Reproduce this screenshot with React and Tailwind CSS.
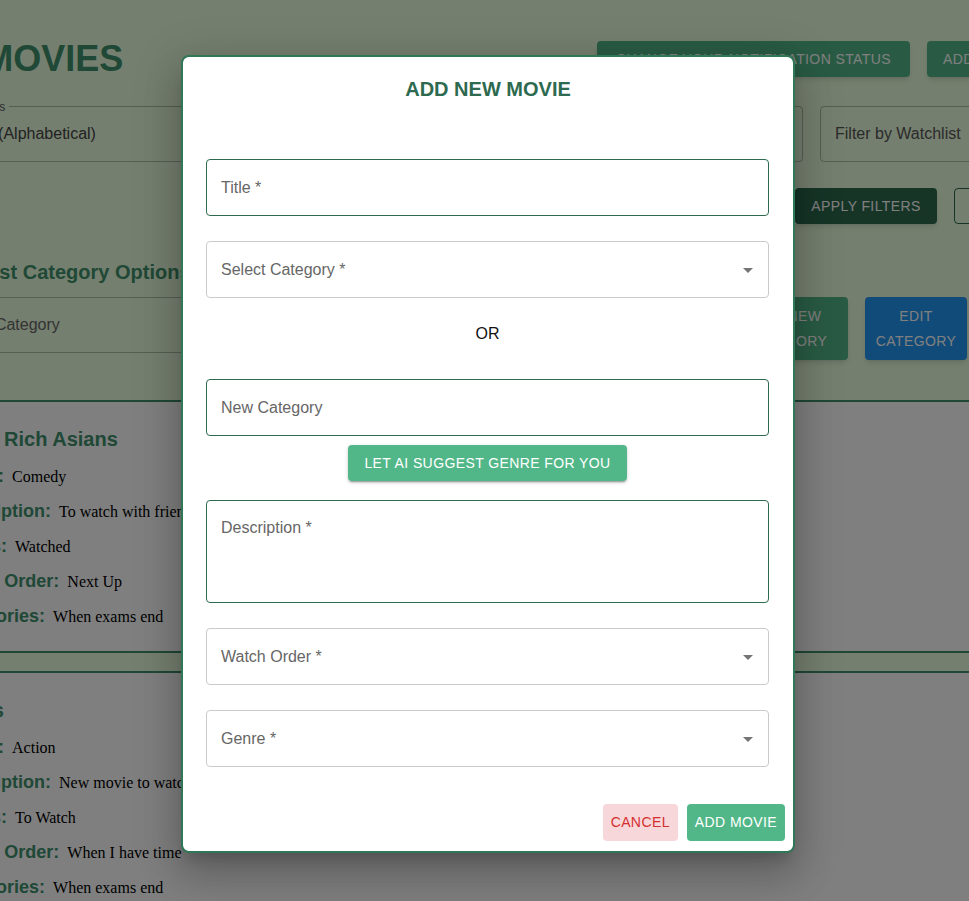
import React from 'react';

const MOVIES = [
  {
    title: 'Crazy Rich Asians',
    genre: 'Comedy',
    description: 'To watch with friends',
    status: 'Watched',
    order: 'Next Up',
    categories: 'When exams end',
  },
  {
    title: 'Wings',
    genre: 'Action',
    description: 'New movie to watch',
    status: 'To Watch',
    order: 'When I have time',
    categories: 'When exams end',
  },
];

function DropArrow() {
  return (
    <svg viewBox="0 0 24 24" className="w-6 h-6 shrink-0 fill-[#757575]">
      <path d="M7 10l5 5 5-5z" />
    </svg>
  );
}

// outlined text field / select, label sitting inside (not shrunk)
function Field({ label, green, select, tall, className = '' }) {
  return (
    <div
      className={`flex ${tall ? 'h-[103px] items-start pt-[15px]' : 'h-[57px] items-center'} rounded border ${
        green ? 'border-[#2d6a4f]' : 'border-[#cacaca]'
      } pl-[14px] pr-[8px] text-[16px] leading-[23px] text-[#666] ${className}`}
    >
      <span className="flex-1">{label}</span>
      {select && <DropArrow />}
    </div>
  );
}

function MovieRow({ label, value }) {
  return (
    <div className="h-[35px] leading-[35px] whitespace-nowrap">
      <span className="text-[18px] font-bold text-[#40916c]">{label}:</span>
      <span className="ml-[8px] font-['Liberation_Serif',serif] text-[16px] text-black">{value}</span>
    </div>
  );
}

function MovieCard({ movie }) {
  return (
    <div className="bg-white border-y-2 border-[#40916c] pt-[23px] pb-[17px]">
      <div className="-ml-[54px]">
        <h2 className="-ml-[2px] mb-[6px] text-[20px] leading-[28px] font-bold text-[#40916c] whitespace-nowrap">
          {movie.title}
        </h2>
        <MovieRow label="Genre" value={movie.genre} />
        <MovieRow label="Description" value={movie.description} />
        <MovieRow label="Status" value={movie.status} />
        <MovieRow label="Watch Order" value={movie.order} />
        <MovieRow label="Categories" value={movie.categories} />
      </div>
    </div>
  );
}

const btn = 'shrink-0 rounded text-[14px] font-medium uppercase tracking-[0.4px] whitespace-nowrap';

export default function App() {
  return (
    <div className="relative h-[901px] w-full overflow-hidden bg-[#eaffde] font-['Liberation_Sans',Arial,sans-serif]">
      {/* page behind the dialog */}
      <section className="pt-[40px] pb-[40px]">
        <div className="flex items-center h-[38px]">
          <h1 className="-ml-[80px] w-[677px] shrink-0 text-[36px] leading-[40px] font-bold text-[#40916c] whitespace-nowrap">
            MY MOVIES
          </h1>
          <div className="flex gap-[17px]">
            <button className={`${btn} w-[313px] h-9 bg-[#52b788] text-white shadow-md`}>
              Change your notification status
            </button>
            <button className={`${btn} h-9 px-4 bg-[#52b788] text-white shadow-md`}>Add new movie</button>
          </div>
        </div>

        <div className="flex gap-[17px] mt-[28px]">
          <div className="relative -ml-[51px] w-[854px] shrink-0 h-[56px] flex items-center pl-[14px] rounded border border-black/25 text-[16px] text-[#444]">
            <span className="absolute -top-[9px] left-[-12px] px-1 bg-[#eaffde] text-[12px] text-[#555]">Sort Movies</span>
            Title (Alphabetical)
          </div>
          <div className="w-[240px] shrink-0 h-[56px] flex items-center pl-[14px] rounded border border-black/25 text-[16px] text-[#555]">
            Filter by Watchlist
          </div>
        </div>

        <div className="flex gap-[17px] mt-[26px] ml-[795px]">
          <button className={`${btn} w-[142px] h-[36px] bg-[#2d6a4f] text-white shadow-md`}>Apply filters</button>
          <button className={`${btn} h-[36px] px-4 border border-[#2d6a4f] text-[#2d6a4f]`}>Clear filters</button>
        </div>

        <h2 className="-ml-[71px] mt-[34px] text-[20px] leading-[28px] font-bold text-[#40916c] whitespace-nowrap">
          Watchlist Category Options
        </h2>

        <div className="flex gap-[17px] mt-[11px]">
          <div className="-ml-[69px] w-[778px] shrink-0 h-[56px] flex items-center pl-[14px] rounded border border-black/25 text-[16px] text-[#666]">
            Select Category
          </div>
          <button className={`${btn} w-[122px] h-[63px] leading-[25px] bg-[#52b788] text-white shadow-md`}>
            Add new
            <br />
            category
          </button>
          <button className={`${btn} w-[102px] h-[63px] leading-[25px] bg-[#2196f3] text-white shadow-md`}>
            Edit
            <br />
            category
          </button>
        </div>
      </section>

      <section className="flex flex-col gap-[18px]">
        {MOVIES.map((m) => (
          <MovieCard key={m.title} movie={m} />
        ))}
      </section>

      {/* dialog */}
      <div className="absolute inset-0 bg-black/50">
        <div className="ml-[181px] mt-[55px] w-[614px] bg-white border-2 border-[#2f7756] rounded-lg shadow-[0_11px_15px_-7px_rgba(0,0,0,0.2),0_24px_38px_3px_rgba(0,0,0,0.14),0_9px_46px_8px_rgba(0,0,0,0.12)]">
          <h2 className="pt-[18px] text-center text-[20px] leading-[28px] font-bold text-[#2d6a4f]">ADD NEW MOVIE</h2>

          <div className="pl-[23px] pr-[24px]">
            <Field label="Title *" green className="mt-[56px]" />
            <Field label="Select Category *" select className="mt-[25px]" />
            <div className="mt-[24px] text-center text-[16px] leading-6 text-[#111]">OR</div>
            <Field label="New Category" green className="mt-[33px]" />
            <div className="flex justify-center mt-[9px]">
              <button
                className={`${btn} h-9 px-4 bg-[#52b788] text-white shadow-[0_3px_1px_-2px_rgba(0,0,0,0.2),0_2px_2px_0_rgba(0,0,0,0.14),0_1px_5px_0_rgba(0,0,0,0.12)]`}
              >
                Let AI suggest genre for you
              </button>
            </div>
            <Field label="Description *" green tall className="mt-[19px]" />
            <Field label="Watch Order *" select className="mt-[25px]" />
            <Field label="Genre *" select className="mt-[25px]" />
          </div>

          <div className="flex justify-end gap-[9px] mt-[37px] pr-2 pb-[10px]">
            <button className={`${btn} h-[37px] px-2 bg-[#f8d7da] text-[#d32f2f]`}>Cancel</button>
            <button className={`${btn} h-[37px] px-2 bg-[#52b788] text-white`}>Add movie</button>
          </div>
        </div>
      </div>
    </div>
  );
}
